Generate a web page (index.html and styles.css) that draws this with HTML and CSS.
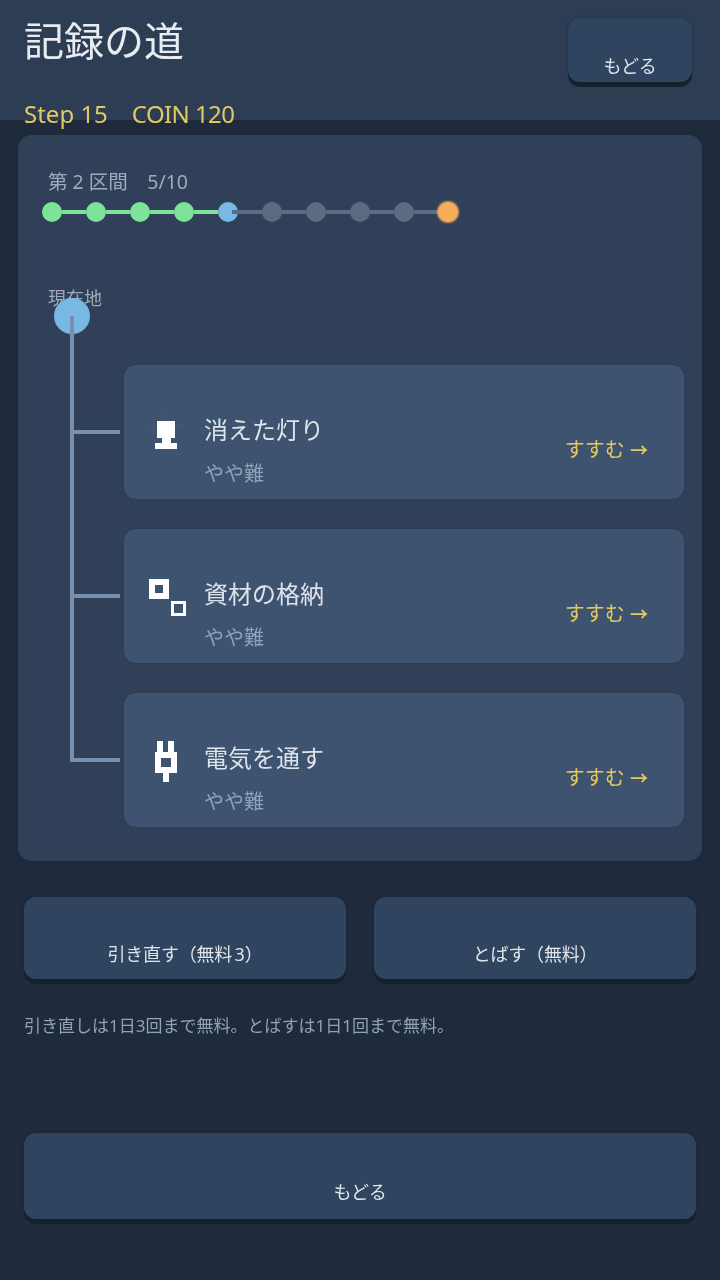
FILE: index.html
```html
<!DOCTYPE html>
<html lang="ja">
<head>
  <meta charset="UTF-8" />
  <meta name="viewport" content="width=device-width, initial-scale=1.0"/>
  <title>記録の道</title>
  <link rel="stylesheet" href="styles.css">
</head>
<body>

  <header class="top">
    <div class="top-text">
      <h1>記録の道</h1>
      <p class="stats">Step 15　<span class="coin">COIN 120</span></p>
    </div>
    <button class="btn btn-top"><span class="btn-label">もどる</span></button>
  </header>

  <section class="panel">
    <p class="section-label">第 2 区間　5/10</p>

    <!-- 進行バー -->
    <div class="track">
      <span class="dot done"></span><span class="seg done"></span>
      <span class="dot done"></span><span class="seg done"></span>
      <span class="dot done"></span><span class="seg done"></span>
      <span class="dot done"></span><span class="seg done"></span>
      <span class="dot now"></span><span class="seg after-now"></span>
      <span class="dot"></span><span class="seg"></span>
      <span class="dot"></span><span class="seg"></span>
      <span class="dot"></span><span class="seg"></span>
      <span class="dot"></span><span class="seg"></span>
      <span class="dot goal"></span>
    </div>

    <div class="route">
      <p class="here">現在地</p>
      <span class="route-line"></span>
      <span class="route-node"></span>

      <div class="row">
        <span class="branch"></span>
        <div class="quest">
          <svg class="icon" viewBox="0 0 44 44" shape-rendering="crispEdges">
            <g fill="#fff" fill-opacity="0.03">
              <rect x="21" y="1" width="2" height="6"/>
              <rect x="4" y="12" width="7" height="2"/>
              <rect x="33" y="12" width="7" height="2"/>
            </g>
            <g fill="#fff">
              <rect x="13" y="8" width="18" height="17"/>
              <rect x="18" y="25" width="9" height="5"/>
              <rect x="11" y="30" width="22" height="6"/>
            </g>
          </svg>
          <div class="quest-text">
            <h2>消えた灯り</h2>
            <p>やや難</p>
          </div>
          <span class="go">すすむ <span class="arrow">→</span></span>
        </div>
      </div>

      <div class="row">
        <span class="branch"></span>
        <div class="quest">
          <svg class="icon" viewBox="0 0 44 44" shape-rendering="crispEdges">
            <path fill="#fff" fill-rule="evenodd" d="M5 2h20v20H5zM11 8v8h8V8z"/>
            <path fill="#fff" fill-rule="evenodd" d="M27 24h15v15H27zM30 27v9h9v-9z"/>
          </svg>
          <div class="quest-text">
            <h2>資材の格納</h2>
            <p>やや難</p>
          </div>
          <span class="go">すすむ <span class="arrow">→</span></span>
        </div>
      </div>

      <div class="row">
        <span class="branch"></span>
        <div class="quest">
          <svg class="icon" viewBox="0 0 44 44" shape-rendering="crispEdges">
            <path fill="#fff" fill-rule="evenodd" d="M13 0h6v11h5V0h6v11h3v21H25v9h-6v-9H11V11h2zM17 17v9h10v-9z"/>
          </svg>
          <div class="quest-text">
            <h2>電気を通す</h2>
            <p>やや難</p>
          </div>
          <span class="go">すすむ <span class="arrow">→</span></span>
        </div>
      </div>
    </div>
  </section>

  <div class="actions">
    <button class="btn btn-action"><span class="btn-label">引き直す（無料 3）</span></button>
    <button class="btn btn-action"><span class="btn-label">とばす（無料）</span></button>
  </div>

  <p class="note">引き直しは1日3回まで無料。とばすは1日1回まで無料。</p>

  <button class="btn btn-back"><span class="btn-label">もどる</span></button>

</body>
</html>
```

FILE: styles.css
```css
html, body {
  margin: 0;
  padding: 0;
}

body {
  width: 720px;
  height: 1280px;
  overflow: hidden;
  background-color: #1f2b3c;
  font-family: "Noto Sans", "Noto Sans CJK JP", sans-serif;
  color: #e6eaf0;
}

h1, h2, p {
  margin: 0;
  font-weight: 400;
}

/* the reference text is soft, as if scaled up */
h1, h2, p, .btn-label, .go {
  filter: blur(0.45px);
}

.top {
  height: 120px;
  box-sizing: border-box;
  padding: 18px 28px 0 24px;
  background-color: #2d3d54;
  display: flex;
  justify-content: space-between;
  align-items: flex-start;
}

h1 {
  font-size: 40px;
  line-height: 46px;
  color: #e8ebef;
}

.stats {
  margin-top: 34px;
  font-size: 24px;
  line-height: 32px;
  color: #e2c964;
}

.coin {
  letter-spacing: -0.6px;
}

.btn {
  display: flex;
  justify-content: center;
  align-items: flex-end;
  padding: 0 0 12px;
  border: none;
  border-radius: 12px;
  background-color: #2f455f;
  color: #dfe5ea;
  font-family: inherit;
  font-size: 18px;
  line-height: 24px;
  letter-spacing: -0.2px;
  word-spacing: -2px;
  box-shadow: 0 5px 0 #17212d, 0 0 3px rgba(20, 30, 45, 0.5);
}

.btn-top {
  width: 124px;
  height: 64px;
  padding-bottom: 4px;
}

.panel {
  margin: 15px 18px 0;
  height: 726px;
  box-sizing: border-box;
  padding: 35px 18px 0 30px;
  background-color: #2f4058;
  border-radius: 14px;
  box-shadow: 0 0 3px rgba(30, 42, 60, 0.6);
}

.section-label {
  font-size: 19.5px;
  line-height: 24px;
  color: #9eabb9;
}

.track {
  margin: 8px 0 0 -6px;
  display: flex;
  align-items: center;
}

.dot {
  width: 20px;
  height: 20px;
  flex: none;
  border-radius: 50%;
  background-color: #5a6b82;
}

.dot.done { background-color: #7ee29a; }
.dot.now { background-color: #78b8e4; }

.dot.goal {
  background-color: #f6ad5a;
  box-shadow: 0 0 2px 1px rgba(246, 173, 90, 0.8);
}

.seg {
  width: 24px;
  height: 4px;
  flex: none;
  background-color: #5a6b82;
}

.seg.done { background-color: #7ee29a; }

.seg.after-now {
  width: 30px;
  margin-left: -6px;
  position: relative;
}

.route {
  position: relative;
  margin-top: 66px;
}

.here {
  height: 20px;
  margin-bottom: 57px;
  font-size: 18px;
  line-height: 20px;
  color: #9eabb9;
}

.route-node {
  position: absolute;
  left: 6px;
  top: 10px;
  width: 36px;
  height: 36px;
  border-radius: 50%;
  background-color: #78b8e4;
}

.route-line {
  position: absolute;
  left: 22px;
  top: 28px;
  width: 4px;
  height: 446px;
  background-color: #7790b0;
  z-index: 1;
}

.row {
  display: flex;
  align-items: flex-start;
  margin-bottom: 30px;
}

.row:last-child {
  margin-bottom: 0;
}

.branch {
  width: 48px;
  height: 4px;
  margin: 65px 4px 0 24px;
  flex: none;
  background-color: #7790b0;
}

.quest {
  flex: 1;
  height: 134px;
  box-sizing: border-box;
  padding: 47px 36px 0 20px;
  display: flex;
  align-items: flex-start;
  background-color: #3d536f;
  border-radius: 12px;
  box-shadow: 0 0 2px rgba(30, 42, 60, 0.3);
}

.icon {
  width: 44px;
  height: 44px;
  flex: none;
  margin-top: 1px;
}

.quest-text {
  flex: 1;
  margin-left: 16px;
}

.quest-text h2 {
  font-size: 24px;
  line-height: 36px;
  color: #dde3ea;
}

.quest-text p {
  margin-top: 11px;
  font-size: 20px;
  line-height: 30px;
  color: #8fa3b8;
}

.go {
  margin-top: 24px;
  font-size: 20px;
  line-height: 28px;
  color: #e2c964;
}

.arrow {
  font-size: 18px;
  font-weight: 700;
}

.actions {
  margin: 36px 24px 0;
  display: flex;
  gap: 28px;
}

.btn-action {
  flex: 1;
  height: 82px;
  padding-bottom: 13px;
}

.note {
  margin: 35px 24px 0;
  font-size: 17px;
  line-height: 24px;
  color: #8fa3b5;
}

.btn-back {
  width: 672px;
  height: 86px;
  margin: 95px 24px 0;
  padding-bottom: 15px;
}
```
